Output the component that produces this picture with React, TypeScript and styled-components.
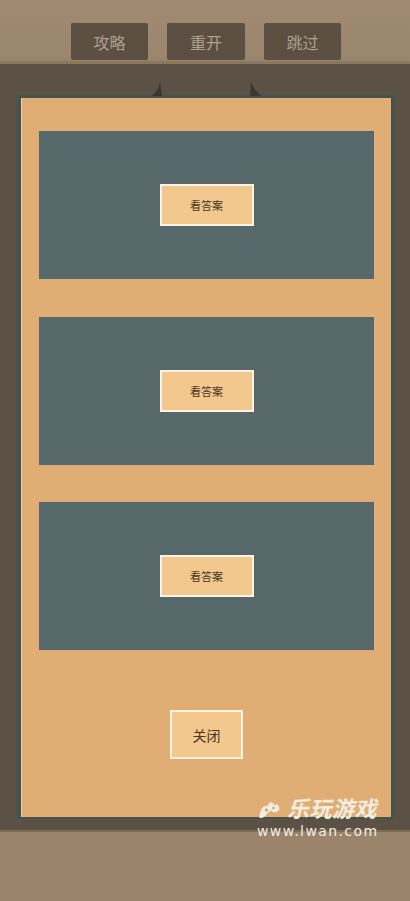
import React from 'react'
import styled, { createGlobalStyle } from 'styled-components'

const GlobalStyle = createGlobalStyle`
  html, body {
    margin: 0;
    padding: 0;
    background: #9b866d;
    font-family: "Liberation Sans", "Noto Sans CJK SC", sans-serif;
  }
`

const Page = styled.div`
  position: relative;
  width: 410px;
  height: 901px;
  display: flex;
  flex-direction: column;
  overflow: hidden;
`

const TopBar = styled.div`
  height: 64px;
  flex: none;
  box-sizing: border-box;
  padding: 23px 0 0 71px;
  display: grid;
  grid-template-columns: 77px 78px 77px;
  grid-template-rows: 37px;
  column-gap: 19px;
  background: linear-gradient(#a08b72, #9a866c);
  border-bottom: 3px solid #8b7860;
`

const ToolButton = styled.button`
  padding: 0;
  border: none;
  border-radius: 2px;
  background: #5c4f41;
  color: #aaa193;
  font-family: inherit;
  font-size: 16px;
`

const Stage = styled.div`
  position: relative;
  height: 766px;
  flex: none;
  box-sizing: border-box;
  padding: 31px 16px 0 17px;
  background: #5b5144;
`

const Horn = styled.svg<{ $left: number }>`
  position: absolute;
  top: 18px;
  left: ${p => p.$left}px;
`

const Panel = styled.div`
  box-sizing: border-box;
  height: 724px;
  padding: 33px 17px 0 18px;
  background: #e0ad74;
  border: solid #445350;
  border-width: 3px 3px 2px 4px;
  box-shadow: inset 1px 0 #f0cfa0;
  display: flex;
  flex-direction: column;
  gap: 37.5px;
`

const AnswerCard = styled.div`
  height: 148px;
  flex: none;
  background: #56686a;
  display: flex;
  align-items: center;
  justify-content: center;
`

const LightButton = styled.button<{ $w: number; $h: number; $size: number }>`
  width: ${p => p.$w}px;
  height: ${p => p.$h}px;
  padding: 0;
  box-sizing: border-box;
  border: 2px solid #fdf3e2;
  background: #f2c88f;
  color: #4a3520;
  font-family: inherit;
  font-size: ${p => p.$size}px;
`

const CloseRow = styled.div`
  display: flex;
  justify-content: center;
  padding: 22.5px 0 0;
`

const BottomBar = styled.div`
  flex: 1;
  background: #9a856c;
  border-top: 2px solid #7c6b55;
`

const Watermark = styled.div`
  position: absolute;
  left: 257px;
  top: 798px;
  width: 122px;
  color: #f4ede2;
`

const BrandRow = styled.div`
  display: flex;
  align-items: center;
  gap: 7px;
  height: 24px;
  padding-left: 2px;
`

const BrandName = styled.span`
  font-size: 22px;
  font-weight: 700;
  font-style: italic;
  letter-spacing: 0.5px;
  line-height: 24px;
  white-space: nowrap;
`

const SiteUrl = styled.div`
  font-family: "DejaVu Sans", sans-serif;
  font-size: 14px;
  line-height: 16px;
  letter-spacing: 1.4px;
  white-space: nowrap;
  margin-top: 1px;
`

const App: React.FC = () => (
  <Page>
    <GlobalStyle />
    <TopBar>
      <ToolButton>攻略</ToolButton>
      <ToolButton>重开</ToolButton>
      <ToolButton>跳过</ToolButton>
    </TopBar>
    <Stage>
      <Horn $left={152} width="11" height="14" viewBox="0 0 11 14">
        <path d="M0 14 C3 10 7 8 8 0 L10 14 Z" fill="#3c3531" />
      </Horn>
      <Horn $left={250} width="11" height="14" viewBox="0 0 11 14">
        <path d="M11 14 C8 10 4 8 1 0 L0 14 Z" fill="#3c3531" />
      </Horn>
      <Panel>
        {[0, 1, 2].map(i => (
          <AnswerCard key={i}>
            <LightButton $w={94} $h={42} $size={11}>看答案</LightButton>
          </AnswerCard>
        ))}
        <CloseRow>
          <LightButton $w={73} $h={49} $size={14}>关闭</LightButton>
        </CloseRow>
      </Panel>
    </Stage>
    <BottomBar />
    <Watermark>
      <BrandRow>
        <svg width="21" height="18" viewBox="0 0 21 18">
          <path
            d="M0.5 17 C0.5 12 2 7 5.5 5 L8 5.5 L11 1 L15 2.5 L14 4 L19 3.5 L20.5 8 C19 11 16 12 14 11 L12 9.5 L9 11.5 C7 15 4 17.5 0.5 17 Z"
            fill="#f4ede2"
          />
          <circle cx="7.5" cy="9" r="1.5" fill="#c49a6c" />
          <circle cx="14.5" cy="7" r="1.2" fill="#c49a6c" />
        </svg>
        <BrandName>乐玩游戏</BrandName>
      </BrandRow>
      <SiteUrl>www.lwan.com</SiteUrl>
    </Watermark>
  </Page>
)

export default App
